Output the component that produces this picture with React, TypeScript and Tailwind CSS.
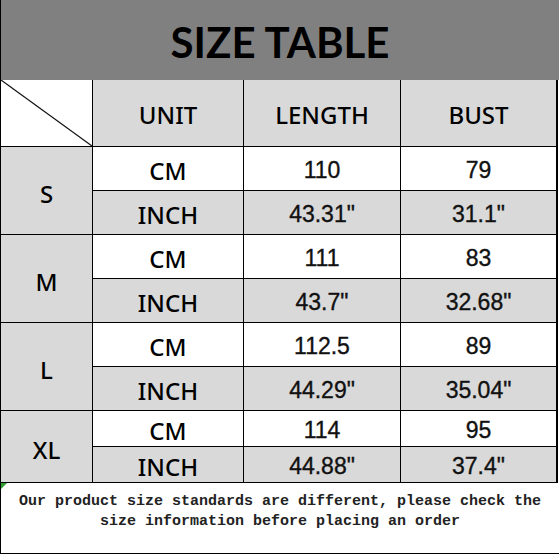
import React from 'react';

interface SizeRow {
  size: string;
  cm: [string, string];
  inch: [string, string];
}

const sizes: SizeRow[] = [
  { size: 'S', cm: ['110', '79'], inch: ['43.31"', '31.1"'] },
  { size: 'M', cm: ['111', '83'], inch: ['43.7"', '32.68"'] },
  { size: 'L', cm: ['112.5', '89'], inch: ['44.29"', '35.04"'] },
  { size: 'XL', cm: ['114', '95'], inch: ['44.88"', '37.4"'] },
];

const yahei = "flex items-center justify-center text-[24px] font-medium text-black [font-family:'Noto_Sans','Liberation_Sans',sans-serif]";
const head = `${yahei} bg-[#d9d9d9]`;
const num = "flex items-center justify-center pt-[4px] text-[23px] text-[#111] [-webkit-text-stroke:0.35px] [font-family:'Liberation_Sans',Arial,sans-serif]";

export default function App() {
  return (
    <div className="w-[559px] h-[554px] bg-white overflow-hidden">
      <div className="h-[80px] bg-[#808080] border-l border-black flex items-center justify-center pt-[3px]">
        <span className="text-[42px] font-bold text-black [font-family:'Lato','Open_Sans',sans-serif] leading-none">
          SIZE TABLE
        </span>
      </div>

      <div className="w-[558px] bg-black pl-px pr-[2px] pb-px grid grid-cols-[91px_150px_156px_155px] grid-rows-[66px_43px_43px_43px_43px_43px_43px_35px_35px] gap-px">
        <div className="relative bg-white">
          <svg className="absolute inset-0" width="91" height="66" viewBox="0 0 91 66">
            <line x1="0" y1="0" x2="91" y2="66" stroke="#111" strokeWidth="1.2" />
          </svg>
        </div>
        <div className={`${head} pt-[4px]`}>UNIT</div>
        <div className={`${head} pt-[4px]`}>LENGTH</div>
        <div className={`${head} pt-[4px]`}>BUST</div>

        {sizes.map((s) => (
          <React.Fragment key={s.size}>
            <div className={`${head} row-span-2 pt-[7px]`}>{s.size}</div>
            <div className={`${yahei} bg-white pt-[4px]`}>CM</div>
            <div className={`${num} bg-white`}>{s.cm[0]}</div>
            <div className={`${num} bg-white`}>{s.cm[1]}</div>
            <div className={`${yahei} bg-[#d9d9d9] pt-[4px]`}>INCH</div>
            <div className={`${num} bg-[#d9d9d9]`}>{s.inch[0]}</div>
            <div className={`${num} bg-[#d9d9d9]`}>{s.inch[1]}</div>
          </React.Fragment>
        ))}
      </div>

      <div className="relative h-[71px] border-l border-b border-black pt-[9px] text-center text-[15px] leading-[20px] font-bold text-[#222] [font-family:'Liberation_Mono','Courier_New',monospace]">
        <span className="absolute left-0 top-0 w-0 h-0 border-t-[6px] border-r-[6px] border-t-[#2e9b2e] border-r-transparent" />
        <p>Our product size standards are different, please check the</p>
        <p>size information before placing an order</p>
      </div>
    </div>
  );
}
